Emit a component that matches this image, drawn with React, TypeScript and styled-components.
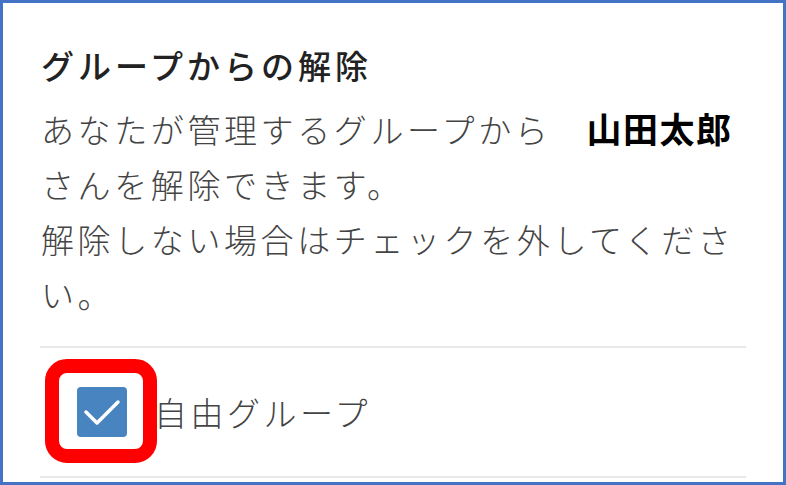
import React from 'react';
import styled, { createGlobalStyle } from 'styled-components';

const GlobalStyle = createGlobalStyle`
  html, body {
    margin: 0;
    padding: 0;
    background: #ffffff;
  }
  body {
    font-family: "Noto Sans CJK JP", "Noto Sans", sans-serif;
  }
`;

const Frame = styled.div`
  box-sizing: border-box;
  width: 786px;
  height: 485px;
  border: 3px solid #4472c4;
  padding: 35px 37px 0 37px;
  display: flex;
  flex-direction: column;
`;

const Title = styled.h2`
  margin: 0 0 8px;
  padding-left: 1px;
  font-size: 33px;
  font-weight: 500;
  line-height: 54px;
  letter-spacing: 4px;
  color: #222222;
`;

const Body = styled.p`
  margin: 0;
  padding-left: 1px;
  font-size: 33px;
  font-weight: 300;
  line-height: 55px;
  letter-spacing: 3.6px;
  color: #444444;
`;

const Line = styled.span`
  display: block;
  white-space: nowrap;
`;

const UserName = styled.span`
  display: inline-block;
  margin-left: 35px;
  font-size: 35px;
  font-weight: 700;
  letter-spacing: 1.5px;
  color: #000000;
`;

const GroupList = styled.ul`
  list-style: none;
  margin: 24px 0 0;
  padding: 0;
  border-top: 2px solid #e8e8e8;
`;

const GroupItem = styled.li`
  display: flex;
  align-items: center;
  height: 128px;
  border-bottom: 2px solid #e8e8e8;
`;

const CheckWrap = styled.span`
  position: relative;
  display: inline-flex;
  margin-left: 37px;
  margin-right: 27px;
`;

const CheckBox = styled.span<{ $checked: boolean }>`
  display: inline-flex;
  width: 50px;
  height: 50px;
  border-radius: 4px;
  background: ${(p) => (p.$checked ? '#4884c0' : '#ffffff')};
  border: ${(p) => (p.$checked ? 'none' : '2px solid #999')};
`;

const Highlight = styled.span`
  position: absolute;
  left: -32px;
  top: -28px;
  width: 112px;
  height: 104px;
  box-sizing: border-box;
  border: 14px solid #ff0000;
  border-radius: 22px;
  pointer-events: none;
`;

const GroupLabel = styled.span`
  font-size: 33px;
  font-weight: 300;
  letter-spacing: 3.5px;
  color: #444444;
`;

const CheckMark = () => (
  <svg width="50" height="50" viewBox="0 0 50 50">
    <path
      d="M9 25 L20 36 L41 15"
      fill="none"
      stroke="#ffffff"
      strokeWidth="3.5"
      strokeLinecap="round"
      strokeLinejoin="round"
    />
  </svg>
);

const App = () => {
  const userName = '山田太郎';
  const groups = [{ name: '自由グループ', checked: true }];

  return (
    <>
      <GlobalStyle />
      <Frame>
        <Title>グループからの解除</Title>
        <Body>
          <Line>
            あなたが管理するグループから<UserName>{userName}</UserName>
          </Line>
          <Line>さんを解除できます。</Line>
          <Line>解除しない場合はチェックを外してくださ</Line>
          <Line>い。</Line>
        </Body>
        <GroupList>
          {groups.map((g) => (
            <GroupItem key={g.name}>
              <CheckWrap>
                <CheckBox $checked={g.checked}>{g.checked && <CheckMark />}</CheckBox>
                <Highlight />
              </CheckWrap>
              <GroupLabel>{g.name}</GroupLabel>
            </GroupItem>
          ))}
        </GroupList>
      </Frame>
    </>
  );
};

export default App;
